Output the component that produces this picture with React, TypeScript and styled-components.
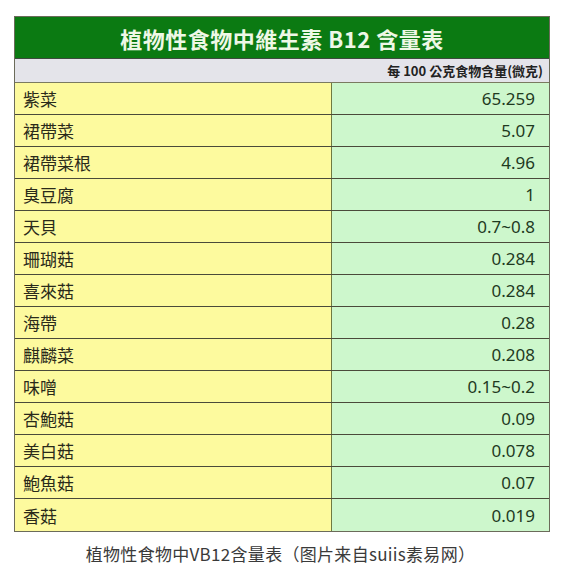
import React from "react";
import styled, { createGlobalStyle } from "styled-components";

const GlobalStyle = createGlobalStyle`
  body {
    margin: 0;
    background: #ffffff;
    font-family: "Noto Sans", "Noto Sans CJK TC", sans-serif;
  }
`;

const Page = styled.div`
  width: 561px;
  padding: 16px 11px 0 14px;
  box-sizing: border-box;
`;

const Table = styled.div`
  width: 536px;
  border: 1px solid #6b6b5a;
  box-sizing: border-box;
`;

const TitleBar = styled.div`
  height: 41px;
  background: #0b7a12;
  color: #eef8e6;
  display: flex;
  align-items: center;
  justify-content: center;
  font-family: "Noto Sans CJK TC", sans-serif;
  font-weight: 700;
  font-size: 22px;
  letter-spacing: 0.5px;
  border-bottom: 1px solid #3d4a3d;
`;

const SubHeader = styled.div`
  height: 23px;
  background: #e4e4ea;
  display: flex;
  align-items: center;
  justify-content: flex-end;
  padding-right: 6px;
  font-family: "Noto Sans CJK TC", sans-serif;
  font-weight: 700;
  font-size: 13px;
  color: #222;
  border-bottom: 1px solid #7a7a60;
`;

const Row = styled.div<{ $last?: boolean }>`
  display: grid;
  grid-template-columns: 317px 1fr;
  height: 32px;
  box-sizing: border-box;
  border-bottom: ${(p) => (p.$last ? "none" : "1px solid #4a4a3a")};
`;

const NameCell = styled.div`
  background: #fdfa9e;
  border-right: 1px solid #6f7a40;
  display: flex;
  align-items: center;
  padding-left: 8px;
  font-family: "Noto Sans CJK TC", sans-serif;
  font-size: 17px;
  color: #2a2a1a;
`;

const ValueCell = styled.div`
  background: #cdf7cc;
  display: flex;
  align-items: center;
  justify-content: flex-end;
  padding-right: 14px;
  font-family: "Noto Sans", sans-serif;
  font-size: 17px;
  color: #1f3a1f;
`;

const Caption = styled.div`
  width: 561px;
  text-align: center;
  margin-top: 9px;
  font-family: "Noto Sans CJK SC", sans-serif;
  font-size: 17px;
  letter-spacing: 0.3px;
  color: #3a3a3a;
`;

const rows: [string, string][] = [
  ["紫菜", "65.259"],
  ["裙帶菜", "5.07"],
  ["裙帶菜根", "4.96"],
  ["臭豆腐", "1"],
  ["天貝", "0.7~0.8"],
  ["珊瑚菇", "0.284"],
  ["喜來菇", "0.284"],
  ["海帶", "0.28"],
  ["麒麟菜", "0.208"],
  ["味噌", "0.15~0.2"],
  ["杏鮑菇", "0.09"],
  ["美白菇", "0.078"],
  ["鮑魚菇", "0.07"],
  ["香菇", "0.019"],
];

const App: React.FC = () => {
  return (
    <>
      <GlobalStyle />
      <Page>
        <Table>
          <TitleBar>植物性食物中維生素 B12 含量表</TitleBar>
          <SubHeader>每 100 公克食物含量(微克)</SubHeader>
          {rows.map(([name, value], i) => (
            <Row key={name} $last={i === rows.length - 1}>
              <NameCell>{name}</NameCell>
              <ValueCell>{value}</ValueCell>
            </Row>
          ))}
        </Table>
      </Page>
      <Caption>植物性食物中VB12含量表（图片来自suiis素易网）</Caption>
    </>
  );
};

export default App;
